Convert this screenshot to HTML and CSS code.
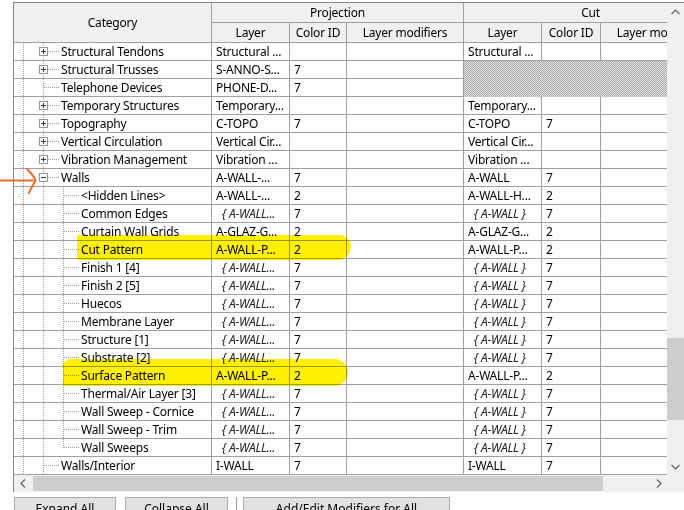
FILE: index.html
```html
<!DOCTYPE html>
<html>
<head>
<meta charset="utf-8">
<link rel="stylesheet" href="styles.css">
</head>
<body>
<div class="page">
  <div class="frame">
    <div class="view">
      <div class="grid">
        <div class="c hd cathd">Category</div>
        <div class="c hd span3">Projection</div>
        <div class="c hd span3">Cut</div>
        <div class="c hd">Layer</div><div class="c hd">Color ID</div><div class="c hd">Layer modifiers</div>
        <div class="c hd">Layer</div><div class="c hd">Color ID</div><div class="c hd">Layer modifiers</div>

        <div class="c cat l1"><i class="box plus"></i><span class="lbl">Structural Tendons</span></div>
        <div class="c">Structural ...</div><div class="c"></div><div class="c"></div><div class="c">Structural ...</div><div class="c"></div><div class="c"></div>

        <div class="c cat l1"><i class="box plus"></i><span class="lbl">Structural Trusses</span></div>
        <div class="c">S-ANNO-S...</div><div class="c">7</div><div class="c"></div><div class="c hatch"></div><div class="c hatch"></div><div class="c hatch"></div>

        <div class="c cat l1 nobox"><span class="lbl">Telephone Devices</span></div>
        <div class="c">PHONE-D...</div><div class="c">7</div><div class="c"></div><div class="c hatch"></div><div class="c hatch"></div><div class="c hatch"></div>

        <div class="c cat l1"><i class="box plus"></i><span class="lbl">Temporary Structures</span></div>
        <div class="c">Temporary...</div><div class="c"></div><div class="c"></div><div class="c">Temporary...</div><div class="c"></div><div class="c"></div>

        <div class="c cat l1"><i class="box plus"></i><span class="lbl">Topography</span></div>
        <div class="c">C-TOPO</div><div class="c">7</div><div class="c"></div><div class="c">C-TOPO</div><div class="c">7</div><div class="c"></div>

        <div class="c cat l1"><i class="box plus"></i><span class="lbl">Vertical Circulation</span></div>
        <div class="c">Vertical Cir...</div><div class="c"></div><div class="c"></div><div class="c">Vertical Cir...</div><div class="c"></div><div class="c"></div>

        <div class="c cat l1"><i class="box plus"></i><span class="lbl">Vibration Management</span></div>
        <div class="c">Vibration ...</div><div class="c"></div><div class="c"></div><div class="c">Vibration ...</div><div class="c"></div><div class="c"></div>

        <div class="c cat l1"><i class="box minus"></i><span class="lbl">Walls</span></div>
        <div class="c">A-WALL-...</div><div class="c">7</div><div class="c"></div><div class="c">A-WALL</div><div class="c">7</div><div class="c"></div>

        <div class="c cat l2"><span class="lbl">&lt;Hidden Lines&gt;</span></div>
        <div class="c">A-WALL-...</div><div class="c">2</div><div class="c"></div><div class="c">A-WALL-H...</div><div class="c">2</div><div class="c"></div>

        <div class="c cat l2"><span class="lbl">Common Edges</span></div>
        <div class="c inh">{ A-WALL...</div><div class="c">7</div><div class="c"></div><div class="c inh">{ A-WALL }</div><div class="c">7</div><div class="c"></div>

        <div class="c cat l2"><span class="lbl">Curtain Wall Grids</span></div>
        <div class="c">A-GLAZ-G...</div><div class="c">2</div><div class="c"></div><div class="c">A-GLAZ-G...</div><div class="c">2</div><div class="c"></div>

        <div class="c cat l2"><span class="lbl">Cut Pattern</span></div>
        <div class="c">A-WALL-P...</div><div class="c">2</div><div class="c"></div><div class="c">A-WALL-P...</div><div class="c">2</div><div class="c"></div>

        <div class="c cat l2"><span class="lbl">Finish 1 [4]</span></div>
        <div class="c inh">{ A-WALL...</div><div class="c">7</div><div class="c"></div><div class="c inh">{ A-WALL }</div><div class="c">7</div><div class="c"></div>

        <div class="c cat l2"><span class="lbl">Finish 2 [5]</span></div>
        <div class="c inh">{ A-WALL...</div><div class="c">7</div><div class="c"></div><div class="c inh">{ A-WALL }</div><div class="c">7</div><div class="c"></div>

        <div class="c cat l2"><span class="lbl">Huecos</span></div>
        <div class="c inh">{ A-WALL...</div><div class="c">7</div><div class="c"></div><div class="c inh">{ A-WALL }</div><div class="c">7</div><div class="c"></div>

        <div class="c cat l2"><span class="lbl">Membrane Layer</span></div>
        <div class="c inh">{ A-WALL...</div><div class="c">7</div><div class="c"></div><div class="c inh">{ A-WALL }</div><div class="c">7</div><div class="c"></div>

        <div class="c cat l2"><span class="lbl">Structure [1]</span></div>
        <div class="c inh">{ A-WALL...</div><div class="c">7</div><div class="c"></div><div class="c inh">{ A-WALL }</div><div class="c">7</div><div class="c"></div>

        <div class="c cat l2"><span class="lbl">Substrate [2]</span></div>
        <div class="c inh">{ A-WALL...</div><div class="c">7</div><div class="c"></div><div class="c inh">{ A-WALL }</div><div class="c">7</div><div class="c"></div>

        <div class="c cat l2"><span class="lbl">Surface Pattern</span></div>
        <div class="c">A-WALL-P...</div><div class="c">2</div><div class="c"></div><div class="c">A-WALL-P...</div><div class="c">2</div><div class="c"></div>

        <div class="c cat l2"><span class="lbl">Thermal/Air Layer [3]</span></div>
        <div class="c inh">{ A-WALL...</div><div class="c">7</div><div class="c"></div><div class="c inh">{ A-WALL }</div><div class="c">7</div><div class="c"></div>

        <div class="c cat l2"><span class="lbl">Wall Sweep - Cornice</span></div>
        <div class="c inh">{ A-WALL...</div><div class="c">7</div><div class="c"></div><div class="c inh">{ A-WALL }</div><div class="c">7</div><div class="c"></div>

        <div class="c cat l2"><span class="lbl">Wall Sweep - Trim</span></div>
        <div class="c inh">{ A-WALL...</div><div class="c">7</div><div class="c"></div><div class="c inh">{ A-WALL }</div><div class="c">7</div><div class="c"></div>

        <div class="c cat l2 last"><span class="lbl">Wall Sweeps</span></div>
        <div class="c inh">{ A-WALL...</div><div class="c">7</div><div class="c"></div><div class="c inh">{ A-WALL }</div><div class="c">7</div><div class="c"></div>

        <div class="c cat l1 nobox"><span class="lbl">Walls/Interior</span></div>
        <div class="c">I-WALL</div><div class="c">7</div><div class="c"></div><div class="c">I-WALL</div><div class="c">7</div><div class="c"></div>
      </div>
    </div>
    <div class="vscroll">
      <div class="sbtn"><svg width="9" height="6" viewBox="0 0 9 6"><path d="M0.5 5 L4.5 1 L8.5 5" fill="none" stroke="#606060" stroke-width="1.2"/></svg></div>
      <div class="vtrack"><div class="vthumb"></div></div>
      <div class="sbtn"><svg width="9" height="6" viewBox="0 0 9 6"><path d="M0.5 1 L4.5 5 L8.5 1" fill="none" stroke="#606060" stroke-width="1.2"/></svg></div>
    </div>
    <div class="hscroll">
      <div class="sbtn"><svg width="6" height="9" viewBox="0 0 6 9"><path d="M5 0.5 L1 4.5 L5 8.5" fill="none" stroke="#606060" stroke-width="1.2"/></svg></div>
      <div class="htrack"><div class="hthumb"></div></div>
      <div class="sbtn"><svg width="6" height="9" viewBox="0 0 6 9"><path d="M1 0.5 L5 4.5 L1 8.5" fill="none" stroke="#606060" stroke-width="1.2"/></svg></div>
    </div>
    <div class="corner"></div>
  </div>
  <div class="buttons">
    <div class="btn b1">Expand All</div>
    <div class="btn b2">Collapse All</div>
    <div class="sep"></div>
    <div class="btn b3">Add/Edit Modifiers for All</div>
  </div>

  <div class="hl hl1"></div>
  <div class="hl hl2"></div>
  <svg class="arrow" width="40" height="40" viewBox="0 0 40 40">
    <path d="M0 20.5 L33 20.5" fill="none" stroke="#ef6a2a" stroke-width="2" stroke-linecap="round"/>
    <path d="M27 9 C31 13 34 16 35.5 20.5 C33 25 30.5 29 29 33" fill="none" stroke="#ef6a2a" stroke-width="2" stroke-linecap="round"/>
  </svg>
</div>
</body>
</html>
```

FILE: styles.css
```css
html, body {
  margin: 0;
  padding: 0;
  background: #ffffff;
  overflow: hidden;
}

body {
  font-family: "Noto Sans", "Open Sans", sans-serif;
  font-size: 12px;
  letter-spacing: -0.2px;
  color: #000;
}

.page {
  position: relative;
  width: 684px;
  height: 510px;
  overflow: hidden;
}

.frame {
  margin: 2px 0 0 13px;
  border-left: 1px solid #828790;
  border-top: 1px solid #828790;
  display: grid;
  grid-template-columns: 653px 17px;
  grid-template-rows: 472px 17px;
  width: 670px;
}

.view {
  overflow: hidden;
  grid-column: 1;
  grid-row: 1;
}

.grid {
  --v: repeating-linear-gradient(to bottom, #a0a0a0 0 1px, transparent 1px 2px);
  --h: repeating-linear-gradient(to right, #a0a0a0 0 1px, transparent 1px 2px);
  display: grid;
  width: 704px;
  grid-template-columns: 198px 78px 57px 117px 78px 59px 117px;
  grid-template-rows: 20px 20px;
  grid-auto-rows: 18px;
}

.c {
  box-sizing: border-box;
  border-right: 1px solid #a0a0a0;
  border-bottom: 1px solid #a0a0a0;
  display: flex;
  align-items: center;
  padding-left: 4px;
  white-space: nowrap;
  overflow: hidden;
  background: #ffffff;
}

.hd {
  background: #f0f0f0;
  justify-content: center;
  padding-left: 0;
}

.cathd {
  grid-row: span 2;
}

.span3 {
  grid-column: span 3;
}

.inh {
  font-style: italic;
  padding-left: 10px;
  color: #222;
}

.hatch {
  border-right-color: #c8c8c8;
  border-bottom-color: #c8c8c8;
  background: repeating-conic-gradient(#a6a6a6 0 25%, #e4e4e4 0 50%) 0 0 / 2px 2px;
}

.cat {
  padding-left: 0;
  background-repeat: no-repeat;
}

.l1 {
  padding-left: 25px;
  background-image: var(--v), var(--v), var(--h);
  background-size: 1px 100%, 1px 100%, 12px 1px;
  background-position: 9px 0, 29px 0, 34px 8px;
}

.l1 .lbl {
  margin-left: 13px;
}

.l1.nobox {
  padding-left: 47px;
  background-size: 1px 100%, 1px 100%, 16px 1px;
  background-position: 9px 0, 29px 0, 30px 8px;
}

.l1.nobox .lbl {
  margin-left: 0;
}

.l2 {
  padding-left: 67px;
  background-image: var(--v), var(--v), var(--v), var(--h);
  background-size: 1px 100%, 1px 100%, 1px 100%, 15px 1px;
  background-position: 9px 0, 29px 0, 49px 0, 50px 8px;
}

.l2.last {
  background-size: 1px 100%, 1px 100%, 1px 9px, 15px 1px;
}

.box {
  display: block;
  flex: none;
  width: 9px;
  height: 9px;
  box-sizing: border-box;
  border: 1px solid #969696;
  background-color: #ffffff;
  background-repeat: no-repeat;
}

.plus {
  background-image: linear-gradient(#3c3c3c, #3c3c3c), linear-gradient(#3c3c3c, #3c3c3c);
  background-size: 5px 1px, 1px 5px;
  background-position: 1px 3px, 3px 1px;
}

.minus {
  background-image: linear-gradient(#3c3c3c, #3c3c3c);
  background-size: 5px 1px;
  background-position: 1px 3px;
}

/* scrollbars */
.vscroll {
  grid-column: 2;
  grid-row: 1;
  background: #f0f0f0;
  display: flex;
  flex-direction: column;
}

.sbtn {
  flex: none;
  width: 17px;
  height: 17px;
  display: flex;
  align-items: center;
  justify-content: center;
}

.vtrack {
  flex: 1;
}

.vthumb {
  margin-top: 318px;
  height: 82px;
  background: #cdcdcd;
}

.hscroll {
  grid-column: 1;
  grid-row: 2;
  background: #f0f0f0;
  display: flex;
}

.htrack {
  flex: 1;
  display: flex;
  align-items: stretch;
  padding: 1px 0;
}

.hthumb {
  margin-left: 2px;
  width: 570px;
  background: #cdcdcd;
}

.corner {
  grid-column: 2;
  grid-row: 2;
  background: #f0f0f0;
}

/* buttons */
.buttons {
  display: flex;
  margin: 5px 0 0 14px;
  align-items: flex-start;
}

.btn {
  box-sizing: border-box;
  height: 23px;
  background: #e1e1e1;
  border: 1px solid #adadad;
  display: flex;
  align-items: center;
  justify-content: center;
  letter-spacing: 0;
}

.b1 { width: 102px; }
.b2 { width: 103px; margin-left: 9px; }
.sep {
  width: 1px;
  height: 23px;
  background: #a0a0a0;
  margin: 0 6px 0 8px;
}
.b3 { width: 207px; }

/* overlays: highlighter marks and annotation arrow */
.hl {
  position: absolute;
  background: #fff000;
  mix-blend-mode: multiply;
}

.hl1 {
  left: 77px;
  top: 235px;
  width: 274px;
  height: 25px;
  border-radius: 2px 12px 14px 3px;
}

.hl2 {
  left: 63px;
  top: 359px;
  width: 285px;
  height: 27px;
  border-radius: 8px 14px 14px 3px;
}

.arrow {
  position: absolute;
  left: 0;
  top: 160px;
}
```
